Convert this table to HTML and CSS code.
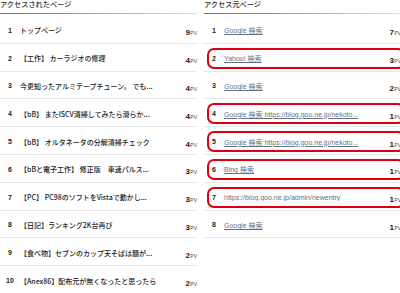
FILE: index.html
```html
<!DOCTYPE html>
<html lang="ja">
<head>
<meta charset="utf-8">
<link rel="stylesheet" href="styles.css">
</head>
<body>
<div class="wrap">
  <section class="col">
    <h2 class="head">アクセスされたページ</h2>
    <ol class="list">
      <li class="row"><div class="inner"><span class="num">1</span><span class="title">トップページ</span><span class="pv"><b>9</b><small>PV</small></span></div></li>
      <li class="row"><div class="inner"><span class="num">2</span><span class="title">【工作】 カーラジオの修理</span><span class="pv"><b>4</b><small>PV</small></span></div></li>
      <li class="row"><div class="inner"><span class="num">3</span><span class="title">今更知ったアルミテープチューン。 でも...</span><span class="pv"><b>4</b><small>PV</small></span></div></li>
      <li class="row"><div class="inner"><span class="num">4</span><span class="title">【bB】 またISCV清掃してみたら滑らか...</span><span class="pv"><b>4</b><small>PV</small></span></div></li>
      <li class="row"><div class="inner"><span class="num">5</span><span class="title">【bB】 オルタネータの分解清掃チェック</span><span class="pv"><b>4</b><small>PV</small></span></div></li>
      <li class="row"><div class="inner"><span class="num">6</span><span class="title">【bBと電子工作】 修正版　車速パルス...</span><span class="pv"><b>3</b><small>PV</small></span></div></li>
      <li class="row"><div class="inner"><span class="num">7</span><span class="title">【PC】 PC98のソフトをVistaで動かし...</span><span class="pv"><b>3</b><small>PV</small></span></div></li>
      <li class="row"><div class="inner"><span class="num">8</span><span class="title">【日記】ランキング2K台再び</span><span class="pv"><b>3</b><small>PV</small></span></div></li>
      <li class="row"><div class="inner"><span class="num">9</span><span class="title">【食べ物】セブンのカップ天そばは麺が...</span><span class="pv"><b>2</b><small>PV</small></span></div></li>
      <li class="row"><div class="inner"><span class="num">10</span><span class="title">【Anex86】配布元が無くなったと思ったら</span><span class="pv"><b>2</b><small>PV</small></span></div></li>
    </ol>
  </section>
  <section class="col">
    <h2 class="head">アクセス元ページ</h2>
    <ol class="list">
      <li class="row"><div class="inner"><span class="num">1</span><a class="link" href="#">Google 検索</a><span class="pv"><b>7</b><small>PV</small></span></div></li>
      <li class="row"><div class="inner mark"><span class="num">2</span><a class="link" href="#">Yahoo! 検索</a><span class="pv"><b>3</b><small>PV</small></span></div></li>
      <li class="row"><div class="inner"><span class="num">3</span><a class="link" href="#">Google 検索</a><span class="pv"><b>2</b><small>PV</small></span></div></li>
      <li class="row"><div class="inner mark"><span class="num">4</span><a class="link" href="#">Google 検索 https://blog.goo.ne.jp/nekoto...</a><span class="pv"><b>1</b><small>PV</small></span></div></li>
      <li class="row"><div class="inner mark"><span class="num">5</span><a class="link" href="#">Google 検索 https://blog.goo.ne.jp/nekoto...</a><span class="pv"><b>1</b><small>PV</small></span></div></li>
      <li class="row"><div class="inner mark"><span class="num">6</span><a class="link" href="#">Bing 検索</a><span class="pv"><b>1</b><small>PV</small></span></div></li>
      <li class="row"><div class="inner mark"><span class="num">7</span><a class="link" href="#">https://blog.goo.ne.jp/admin/newentry</a><span class="pv"><b>1</b><small>PV</small></span></div></li>
      <li class="row"><div class="inner"><span class="num">8</span><a class="link" href="#">Google 検索</a><span class="pv"><b>1</b><small>PV</small></span></div></li>
    </ol>
  </section>
</div>
</body>
</html>
```

FILE: styles.css
```css
html, body {
  margin: 0;
  padding: 0;
  background: #fff;
  overflow: hidden;
}
body {
  width: 400px;
  height: 293px;
  font-family: "Noto Sans CJK JP", sans-serif;
  color: #222;
}
.wrap {
  display: grid;
  grid-template-columns: 197px 197px;
  column-gap: 7px;
}
.col {
  min-width: 0;
}
.head {
  margin: 0;
  font-size: 7.2px;
  font-weight: 500;
  line-height: 9px;
  height: 9px;
  padding-bottom: 4px;
  color: #333;
  border-bottom: 1px solid transparent;
  border-image: linear-gradient(to right, #a85a40 0%, #cf8244 35%, #e8b868 70%, #f4e0b8 100%) 1;
}
.list {
  list-style: none;
  margin: 2px 0 0;
  padding: 0;
}
.row {
  height: 27.8px;
  box-sizing: border-box;
  border-bottom: 1px solid #e6e6e6;
  padding-top: 2px;
  display: flex;
  align-items: center;
}
.inner {
  flex: 1;
  display: flex;
  align-items: center;
  gap: 5px;
  height: 21px;
  box-sizing: border-box;
  margin: 0 -4px 0 3px;
  padding: 0 2px 0 0;
  border: 2px solid transparent;
  border-radius: 7px;
}
.inner.mark {
  border-color: #de0012;
}
.num {
  width: 10px;
  flex: 0 0 10px;
  text-align: center;
  font-family: "Liberation Sans", sans-serif;
  font-weight: bold;
  font-size: 7px;
  color: #222;
}
.title {
  flex: 1;
  min-width: 0;
  font-size: 7px;
  font-weight: 500;
  white-space: nowrap;
  overflow: hidden;
  color: #222;
}
.link {
  flex: 1;
  min-width: 0;
  font-family: "Liberation Sans", "Noto Sans CJK JP", sans-serif;
  font-size: 7px;
  white-space: nowrap;
  overflow: hidden;
  color: #607186;
  text-decoration: underline;
}
.pv {
  flex: 0 0 auto;
  font-family: "Liberation Sans", sans-serif;
  color: #222;
  white-space: nowrap;
}
.pv b {
  font-size: 8px;
  font-weight: bold;
}
.pv small {
  font-size: 5px;
  color: #444;
  margin-left: 0.5px;
}
```
